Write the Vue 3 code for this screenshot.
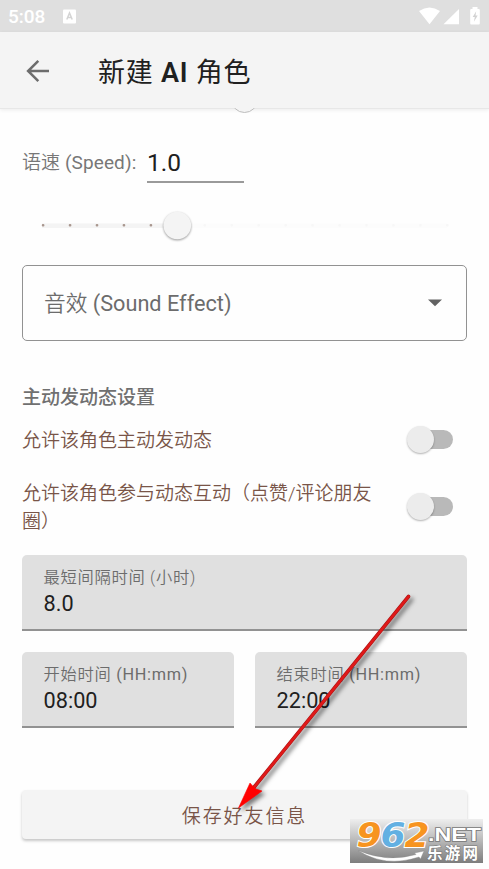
<script setup>
const ticks = Array.from({ length: 16 }, (_, i) => ({ x: 20.5 + i * 26.95, active: i < 5 }))
const switches = [
  { label: '允许该角色主动发动态', tall: false },
  { label: '允许该角色参与动态互动（点赞/评论朋友圈）', tall: true },
]
</script>

<template>
  <div class="screen">
    <header class="status">
      <span class="clock">5:08</span>
      <svg class="badge-a" width="13" height="15" viewBox="0 0 13 15">
        <rect x="0" y="0.5" width="13" height="14" rx="1" fill="#fff" />
        <path d="M3.8 10.500 6.5 4 9.2 10.500M4.8 8.500h3.400" fill="none" stroke="#d4d4d4" stroke-width="1.5" />
      </svg>
      <svg class="signals" width="64" height="20" viewBox="0 0 64 20">
        <path d="M1 5.1Q11.5-2 22 5.1L11.5 18.2Z" fill="#fff" />
        <path d="M25.5 18.2 41 3V18.2Z" fill="#fff" />
        <path d="M54.5 1h5v2h1.3q1 0 1 1v13.4q0 1-1 1h-7.6q-1 0-1-1V4q0-1 1-1h1.3Z" fill="#fff" />
        <path d="M58.2 5.2 54.7 11h2.1l-.9 4.7L59.7 9.5h-2.2Z" fill="#d2d2d2" />
      </svg>
    </header>

    <div class="appbar">
      <svg class="back" width="24" height="24" viewBox="0 0 24 24">
        <path d="M23 12H2.5M12.3 1.8 2.1 12l10.2 10.2" fill="none" stroke="#6c6c6c" stroke-width="2.5" />
      </svg>
      <h1>新建 <b>AI</b> 角色</h1>
      <i class="peek"></i>
    </div>

    <main>
      <div class="speed">
        <label><span class="han">语速</span> (Speed):</label>
        <div class="speed-value">1.0</div>
      </div>

      <svg class="slider" width="445" height="40" viewBox="0 0 445 40">
        <rect x="20" y="17.5" width="405" height="4.5" fill="#fcfcfc" />
        <rect x="20" y="17.5" width="135" height="4.5" fill="#f4f4f4" />
        <rect
          v-for="t in ticks" :key="t.x" :x="t.x - 0.7" y="18" width="2.6" height="2.6" rx="1"
          :fill="t.active ? '#a9978f' : '#f7f7f7'"
        />
        <circle class="knob" cx="155.3" cy="19.5" r="13.8" fill="#f4f4f4" />
      </svg>

      <div class="select">
        <span><span class="han">音效</span> (Sound Effect)</span>
        <svg width="14" height="8" viewBox="0 0 14 8"><path d="M0 .5h14L7 7.3Z" fill="#626262" /></svg>
      </div>

      <h2>主动发动态设置</h2>

      <div v-for="s in switches" :key="s.label" class="switch-row" :class="{ tall: s.tall }">
        <span>{{ s.label }}</span>
        <div class="track"><i></i></div>
      </div>

      <div class="field wide">
        <small><span class="han">最短间隔时间 (小时)</span></small>
        <b>8.0</b>
      </div>
      <div class="pair">
        <div class="field">
          <small><span class="han">开始时间</span> (HH:mm)</small>
          <b>08:00</b>
        </div>
        <div class="field">
          <small><span class="han">结束时间</span> (HH:mm)</small>
          <b>22:00</b>
        </div>
      </div>

      <button>保存好友信息</button>
    </main>

    <svg class="arrow" width="190" height="230" viewBox="0 0 190 230">
      <path d="M177.500 15.500 22 207.500" fill="none" stroke="#a81414" stroke-width="3.6" stroke-linecap="round" />
      <path d="M177.500 15.500 22 207.500" fill="none" stroke="#e01919" stroke-width="2.6" stroke-linecap="round" />
      <path d="M7.500 227 19 202 22.500 206 25 208 31 210Z" fill="#f00" stroke="#f00" stroke-width=".6" />
    </svg>

    <svg class="mark" width="133" height="44" viewBox="0 0 133 44">
      <defs>
        <linearGradient id="shade" x1="0" y1="0" x2="0" y2="1">
          <stop offset="0" stop-color="#eeeeee" />
          <stop offset="0.5" stop-color="#b7b7b7" />
          <stop offset="1" stop-color="#7d7d7d" />
        </linearGradient>
      </defs>
      <rect width="133" height="44" fill="url(#shade)" />
      <g class="digits">
        <text x="6.500" y="27.500" textLength="25" lengthAdjust="spacingAndGlyphs" fill="#f79420">9</text>
        <text x="30.500" y="27.500" textLength="25" lengthAdjust="spacingAndGlyphs" fill="#62b0e2">6</text>
        <text x="54.500" y="27.500" textLength="25" lengthAdjust="spacingAndGlyphs" fill="#f79420">2</text>
      </g>
      <path d="M8 31.500Q38 44 66 35.500L64.500 34 74 32 70.500 40 69 38Q35 49 8 31.500Z" fill="#fff" stroke="#888" stroke-width=".4" />
      <text class="net" x="78" y="21.500" textLength="53" lengthAdjust="spacingAndGlyphs">.NET</text>
      <text class="cn" x="77" y="39.500" textLength="51">乐游网</text>
    </svg>
  </div>
</template>

<style>
body { margin: 0; background: #fefefe; }
</style>

<style scoped>
.screen {
  position: relative;
  width: 489px;
  height: 869px;
  overflow: hidden;
  background: #fefefe;
  font-family: Roboto, "Noto Sans CJK SC", sans-serif;
  color: #202020;
}
.han { font-weight: 350; }
.status {
  display: flex;
  align-items: center;
  height: 32px;
  padding: 0 7px 0 8px;
  background: #dfdfdf;
}
.clock { width: 55px; color: #fff; font-size: 19px; font-weight: 500; line-height: 34px; padding-top: 2px; }
.signals { margin-left: auto; margin-top: -1px; }
.appbar {
  position: relative;
  display: flex;
  align-items: center;
  height: 76px;
  background: #f4f4f4;
  border-bottom: 1px solid #e7e7e7;
  box-shadow: 0 1px 4px rgba(0, 0, 0, 0.08);
}
.back { margin: 1px 0 0 26px; }
h1 { margin: 5px 0 0 48px; font-size: 27px; font-weight: 400; line-height: 36px; letter-spacing: 0.75px; white-space: pre; }
h1 b { font-weight: 600; }
.peek {
  position: absolute;
  left: 231px;
  top: 76px;
  width: 27px;
  height: 5px;
  overflow: hidden;
}
.peek::after {
  content: "";
  position: absolute;
  box-sizing: border-box;
  left: 0;
  bottom: 0;
  width: 27px;
  height: 27px;
  border-radius: 50%;
  background: #f4f4f4;
  border: 1px solid #bdbdbd;
}
main { display: flex; flex-direction: column; padding: 36px 22px 0; }
.speed { display: flex; height: 38px; color: #777; font-size: 19px; }
.speed label { width: 125px; line-height: 36px; white-space: nowrap; letter-spacing: 0.1px; }
.speed-value {
  box-sizing: border-box;
  width: 97px;
  height: 38px;
  border-bottom: 2px solid #9a9a9a;
  color: #202020;
  font-size: 24.500px;
  line-height: 36px;
}
.slider { margin-top: 23px; overflow: visible; }
.knob { filter: drop-shadow(0 1px 1px rgba(0, 0, 0, 0.4)); }
.select {
  display: flex;
  align-items: center;
  justify-content: space-between;
  box-sizing: border-box;
  height: 76px;
  margin-top: 19px;
  padding: 0 24px 0 21px;
  border: 1px solid #929292;
  border-radius: 5px;
  color: #6c6c6c;
  font-size: 21.700px;
}
.select > span { margin-top: -4px; }
h2 { margin: 43px 0 0; height: 28px; line-height: 28px; font-size: 19px; font-weight: 500; color: #707070; }
.switch-row {
  display: flex;
  justify-content: space-between;
  align-items: center;
  height: 54px;
  color: #795548;
  font-size: 19px;
  font-weight: 350;
  line-height: 28px;
}
.switch-row.tall { height: 80px; }
.switch-row span { width: 360px; margin-top: 3px; }
.track { position: relative; width: 36px; height: 19px; margin-right: 14px; border-radius: 10px; background: #b9b9b9; }
.track i {
  position: absolute;
  left: -10px;
  top: -4px;
  width: 27px;
  height: 27px;
  border-radius: 50%;
  background: #ececec;
  box-shadow: 0 1px 2px rgba(0, 0, 0, 0.3);
}
.field {
  display: flex;
  flex-direction: column;
  flex: 1;
  box-sizing: border-box;
  min-height: 76px;
  padding: 10px 21.500px 0;
  border-radius: 5px 5px 0 0;
  border-bottom: 2px solid #929292;
  background: #e0e0e0;
}
.field.wide { margin-top: 9px; }
.field small { color: #6c6c6c; font-size: 16.300px; line-height: 26px; letter-spacing: 0.7px; white-space: nowrap; }
.field b { font-size: 21.700px; font-weight: 400; line-height: 26px; }
.pair { display: flex; gap: 21px; margin-top: 21px; }
button {
  height: 49px;
  margin-top: 62px;
  padding: 0;
  border: 0;
  border-radius: 4px;
  background: #f4f4f4;
  box-shadow: 0 2px 3px rgba(0, 0, 0, 0.22);
  color: #795548;
  font: 350 19px Roboto, "Noto Sans CJK SC", sans-serif;
  letter-spacing: 1.900px;
}
.arrow { position: absolute; left: 231px; top: 581px; filter: drop-shadow(3px 3px 2px rgba(0, 0, 0, 0.5)); }
.mark { position: absolute; left: 350px; top: 819px; overflow: visible; }
.digits { font: italic 700 33px "DejaVu Sans", sans-serif; stroke: #fff; stroke-width: 2px; paint-order: stroke; }
.net { font: 700 18.500px "Liberation Sans", sans-serif; fill: #fff; stroke: #777; stroke-width: 1.500px; paint-order: stroke; }
.cn { font: 700 15.500px "Noto Sans CJK SC", sans-serif; fill: #fff; stroke: #777; stroke-width: 1px; paint-order: stroke; }
</style>
